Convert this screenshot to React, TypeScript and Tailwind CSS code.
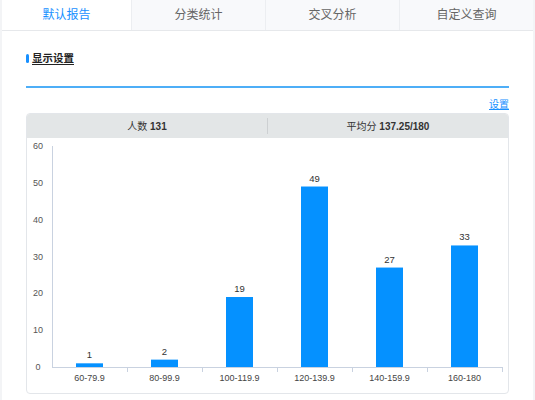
import React from "react";

const tabs = ["默认报告", "分类统计", "交叉分析", "自定义查询"];

const bars = [
  { label: "60-79.9", value: 1 },
  { label: "80-99.9", value: 2 },
  { label: "100-119.9", value: 19 },
  { label: "120-139.9", value: 49 },
  { label: "140-159.9", value: 27 },
  { label: "160-180", value: 33 },
];

const axisX = 25;
const zeroY = 229;
const unit = 221 / 60;
const step = 75;

function Chart() {
  return (
    <svg width="481" height="255" className="block" style={{ fontFamily: "'Liberation Sans', 'Noto Sans CJK SC', sans-serif" }}>
      {[0, 10, 20, 30, 40, 50, 60].map((t) => (
        <text key={t} x={11} y={zeroY - t * unit + 3} fontSize="9" fill="#555" textAnchor="middle">
          {t}
        </text>
      ))}
      <line x1={axisX + 0.5} y1={8} x2={axisX + 0.5} y2={zeroY} stroke="#c9d2e0" />
      <line x1={axisX} y1={zeroY + 0.5} x2={axisX + step * 6} y2={zeroY + 0.5} stroke="#c9d2e0" />
      {bars.map((_, i) => (
        <line key={i} x1={axisX + step * (i + 1) + 0.5} y1={zeroY} x2={axisX + step * (i + 1) + 0.5} y2={zeroY + 5} stroke="#c9d2e0" />
      ))}
      {bars.map((b, i) => {
        const cx = axisX + step * i + step / 2;
        const h = b.value * unit;
        return (
          <g key={b.label}>
            <rect x={cx - 13.5} y={zeroY - h} width={27} height={h} fill="#0591ff" />
            <text x={cx} y={zeroY - h - 5} fontSize="9.5" fill="#333" textAnchor="middle">
              {b.value}
            </text>
            <text x={cx} y={zeroY + 14} fontSize="9" fill="#444" textAnchor="middle">
              {b.label}
            </text>
          </g>
        );
      })}
    </svg>
  );
}

export default function App() {
  return (
    <div
      className="w-[535px] h-[400px] bg-[#f3f4f6] overflow-hidden"
      style={{ fontFamily: "'Liberation Sans', 'Noto Sans CJK SC', sans-serif" }}
    >
      <div className="ml-[2px] w-[531px] h-full bg-white">
        <div className="flex h-[31px] border-b border-[#e6e8eb]">
          {tabs.map((t, i) => (
            <div
              key={t}
              className={
                i === 0
                  ? "w-[130px] flex items-center justify-center text-[12px] text-[#1890ff] bg-white border-r border-[#eceef1]"
                  : "flex-1 flex items-center justify-center text-[12px] text-[#666] bg-[#f8f9fb] border-r border-[#eceef1] last:border-r-0"
              }
            >
              {t}
            </div>
          ))}
        </div>

        <div className="px-[24px]">
          <div className="flex items-start gap-[3px] pt-[20px] h-[55px]">
            <span className="mt-[3px] w-[3px] h-[9px] rounded-sm bg-[#1890ff]" />
            <span className="text-[10.5px] leading-[14px] font-bold text-[#222] underline underline-offset-2">显示设置</span>
          </div>
          <div className="h-[2px] bg-[#4eaef7]" />
          <div className="flex justify-end h-[25px] items-end pb-[1px]">
            <span className="text-[10px] text-[#1890ff] underline">设置</span>
          </div>

          <div className="w-[483px] border border-[#e3e6ea] rounded-[4px] overflow-hidden">
            <div className="flex h-[24px] bg-[#e3e6e7] text-[10px] text-[#333]">
              <div className="flex-1 flex items-center justify-center">
                人数&nbsp;<span className="font-bold">131</span>
              </div>
              <div className="w-px my-[4px] bg-[#cdd0d2]" />
              <div className="flex-1 flex items-center justify-center">
                平均分&nbsp;<span className="font-bold">137.25/180</span>
              </div>
            </div>
            <Chart />
          </div>
        </div>
      </div>
    </div>
  );
}
